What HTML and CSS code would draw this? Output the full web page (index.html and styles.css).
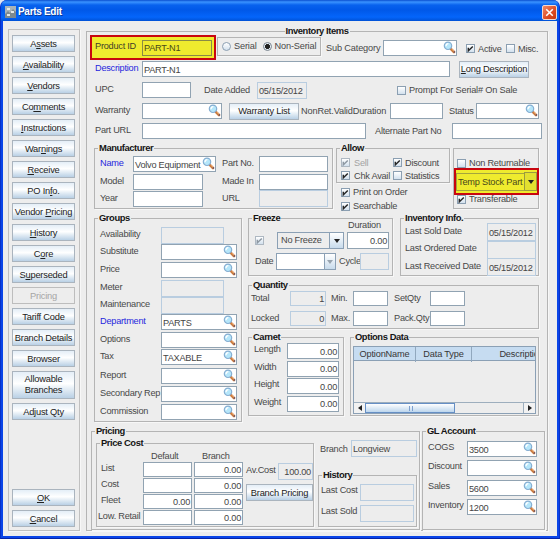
FILE: index.html
```html
<!DOCTYPE html>
<html lang="en">
<head>
<meta charset="utf-8">
<title>Parts Edit</title>
<link rel="stylesheet" href="styles.css">
</head>
<body>
<svg width="0" height="0" class="defs">
  <symbol id="mag" viewBox="0 0 13 13">
    <path d="M7.8 7.8L11 11" stroke="#c9783c" stroke-width="2.6" stroke-linecap="round"/>
    <path d="M8.6 7.9L11 10.2" stroke="#f3b47c" stroke-width="1"/>
    <path d="M10.8 11.5L12 10.6" stroke="#63506c" stroke-width="1.2"/>
    <circle cx="5" cy="4.8" r="3.7" fill="#b5e6fa" stroke="#86aed2" stroke-width="1.2"/>
    <path d="M3 5.2Q3 2.8 5.4 2.7" fill="none" stroke="#fff" stroke-width="1.2"/>
  </symbol>
  <symbol id="tick" viewBox="0 0 9 9"><path d="M2.3 3.8V6.8L6.8 2.4" fill="none" stroke="currentColor" stroke-width="1.4"/></symbol>
</svg>
<div class="window">
  <header class="titlebar">
    <svg class="appicon" viewBox="0 0 11 12"><rect width="11" height="12" fill="#a9b3b8"/><path d="M0 8L3 5L5 7L8 3L11 6V12H0Z" fill="#7d898f"/><path d="M2 2H5V4H2ZM6 5H9V7H6ZM2 8H5V10H2Z" fill="#e4e8e6"/></svg>
    <span class="wtitle">Parts Edit</span>
    <span class="close"><svg viewBox="0 0 14 14"><path d="M3.5 3.5L10.5 10.5M10.5 3.5L3.5 10.5" stroke="#fff" stroke-width="1.7"/></svg></span>
  </header>
  <div class="content">
    <nav class="sidebar">
      <button>A<u>s</u>sets</button>
      <button><u>A</u>vailability</button>
      <button><u>V</u>endors</button>
      <button>Co<u>m</u>ments</button>
      <button><u>I</u>nstructions</button>
      <button>War<u>n</u>ings</button>
      <button><u>R</u>eceive</button>
      <button>PO In<u>f</u>o.</button>
      <button>Vendor <u>P</u>ricing</button>
      <button><u>H</u>istory</button>
      <button>C<u>o</u>re</button>
      <button>S<u>u</u>perseded</button>
      <button class="off">Pricing</button>
      <button>Tariff Code</button>
      <button>Branch Details</button>
      <button>Browser</button>
      <button class="tall">Allowable<br>Branches</button>
      <button>Adjust Qty</button>
      <button class="ok"><u>O</u>K</button>
      <button><u>C</u>ancel</button>
    </nav>
    <main class="panel main">
      <h2 class="center">Inventory Items</h2>
      <div class="row row-id">
        <div class="mark product"><label>Product ID</label><span class="field">PART-N1</span></div>
        <div class="panel kinds"><i class="radio"></i><label>Serial</label><i class="radio on"></i><label>Non-Serial</label></div>
        <label class="subcat">Sub Category</label>
        <span class="field w74"><svg><use href="#mag"/></svg></span>
        <i class="check active"><svg><use href="#tick"/></svg></i><label class="activelabel">Active</label>
        <i class="check"></i><label>Misc.</label>
      </div>
      <div class="row row-desc">
        <label class="lead req">Description</label><span class="field w307">PART-N1</span>
        <button class="longdesc"><u>L</u>ong Description</button>
      </div>
      <div class="row row-upc">
        <label class="lead">UPC</label><span class="field w49"></span>
        <label class="added">Date Added</label><span class="field ro w50">05/15/2012</span>
        <i class="check prompt"></i><label>Prompt For Serial# On Sale</label>
      </div>
      <div class="row row-war">
        <label class="lead">Warranty</label><span class="field w80"><svg><use href="#mag"/></svg></span>
        <button class="warlist">Warranty List</button>
        <label class="nonret">NonRet.ValidDuration</label><span class="field w52"></span>
        <label class="status">Status</label><span class="field w63"><svg><use href="#mag"/></svg></span>
      </div>
      <div class="row row-url">
        <label class="lead">Part URL</label><span class="field w224"></span>
        <label class="altpart">Alternate Part No</label><span class="field w90"></span>
      </div>

      <div class="band band-maker">
        <section class="panel maker">
          <h2>Manufacturer</h2>
          <div class="makergrid">
            <label class="req">Name</label><span class="field w83">Volvo Equipment<svg><use href="#mag"/></svg></span><label>Part No.</label><span class="field"></span>
            <label>Model</label><span class="field w69"></span><label>Made In</label><span class="field"></span>
            <label>Year</label><span class="field w69"></span><label>URL</label><span class="field ro"></span>
          </div>
        </section>
        <div class="allowcol">
          <section class="panel allow">
            <h2>Allow</h2>
            <div class="checks">
              <i class="check dim"><svg><use href="#tick"/></svg></i><label class="faint">Sell</label><i class="check"><svg><use href="#tick"/></svg></i><label>Discount</label>
              <i class="check"><svg><use href="#tick"/></svg></i><label>Chk Avail</label><i class="check"></i><label>Statistics</label>
            </div>
          </section>
          <div class="row opt"><i class="check"><svg><use href="#tick"/></svg></i><label>Print on Order</label></div>
          <div class="row opt"><i class="check"><svg><use href="#tick"/></svg></i><label>Searchable</label></div>
        </div>
        <section class="panel stock">
          <div class="row"><i class="check"></i><label>Non Returnable</label></div>
          <div class="mark temp"><span>Temp Stock Part</span><b class="arrow"></b></div>
          <div class="row"><i class="check"><svg><use href="#tick"/></svg></i><label>Transferable</label></div>
        </section>
      </div>

      <div class="band band-groups">
        <section class="panel groups">
          <h2>Groups</h2>
          <div class="groupgrid">
            <label>Availability</label><span class="field ro"></span>
            <label>Substitute</label><span class="field"><svg><use href="#mag"/></svg></span>
            <label>Price</label><span class="field"><svg><use href="#mag"/></svg></span>
            <label>Meter</label><span class="field ro"></span>
            <label>Maintenance</label><span class="field ro"></span>
            <label class="req">Department</label><span class="field">PARTS<svg><use href="#mag"/></svg></span>
            <label>Options</label><span class="field"><svg><use href="#mag"/></svg></span>
            <label>Tax</label><span class="field">TAXABLE<svg><use href="#mag"/></svg></span>
            <label>Report</label><span class="field"><svg><use href="#mag"/></svg></span>
            <label>Secondary Rep</label><span class="field"><svg><use href="#mag"/></svg></span>
            <label>Commission</label><span class="field"><svg><use href="#mag"/></svg></span>
          </div>
        </section>
        <div class="rightcol">
          <div class="band">
            <section class="panel freeze">
              <h2>Freeze</h2>
              <label class="duration">Duration</label>
              <div class="row fr1"><i class="check dim"><svg><use href="#tick"/></svg></i><span class="select"><span>No Freeze</span><b class="arrow"></b></span><span class="field num">0.00</span></div>
              <div class="row fr2"><label>Date</label><span class="select white"><span></span><b class="arrow pale"></b></span><label class="cycle">Cycle</label><span class="field ro"></span></div>
            </section>
            <section class="panel invinfo">
              <h2>Inventory Info.</h2>
              <div class="infogrid">
                <label>Last Sold Date</label><span class="field ro">05/15/2012</span>
                <label>Last Ordered Date</label><span class="field ro"></span>
                <label>Last Received Date</label><span class="field ro">05/15/2012</span>
              </div>
            </section>
          </div>
          <section class="panel quantity">
            <h2>Quantity</h2>
            <div class="qtygrid">
              <label>Total</label><span class="field ro num">1</span><label>Min.</label><span class="field"></span><label>SetQty</label><span class="field"></span>
              <label>Locked</label><span class="field ro num">0</span><label>Max.</label><span class="field"></span><label>Pack.Qty</label><span class="field"></span>
            </div>
          </section>
          <div class="band band-carnet">
            <section class="panel carnet">
              <h2>Carnet</h2>
              <div class="carnetgrid">
                <label>Length</label><span class="field num">0.00</span>
                <label>Width</label><span class="field num">0.00</span>
                <label>Height</label><span class="field num">0.00</span>
                <label>Weight</label><span class="field num">0.00</span>
              </div>
            </section>
            <section class="panel optdata">
              <h2>Options Data</h2>
              <div class="table">
                <div class="thead"><span>OptionName</span><span>Data Type</span><span>Description</span></div>
                <div class="tbody"></div>
                <div class="scroll"><b class="left"></b><i class="thumb"></i><i class="track"></i><b class="right"></b></div>
              </div>
            </section>
          </div>
        </div>
      </div>

      <div class="band band-price">
        <section class="panel pricing">
          <h2>Pricing</h2>
          <div class="band pricebody">
            <section class="panel pricecost">
              <h2>Price Cost</h2>
              <div class="band">
                <div class="costgrid">
                  <span></span><label class="mid">Default</label><label class="mid">Branch</label>
                  <label>List</label><span class="field"></span><span class="field num">0.00</span>
                  <label>Cost</label><span class="field"></span><span class="field num">0.00</span>
                  <label>Fleet</label><span class="field num">0.00</span><span class="field num">0.00</span>
                  <label class="low">Low. Retail</label><span class="field"></span><span class="field num">0.00</span>
                </div>
                <div class="avg">
                  <div class="row"><label>Av.Cost</label><span class="field ro num">100.00</span></div>
                  <button>Branch Pricing</button>
                </div>
              </div>
            </section>
            <div class="histcol">
              <div class="row branch"><label>Branch</label><span class="field ro">Longview</span></div>
              <section class="panel history">
                <h2>History</h2>
                <div class="histgrid">
                  <label>Last Cost</label><span class="field ro"></span>
                  <label>Last Sold</label><span class="field ro"></span>
                </div>
              </section>
            </div>
          </div>
        </section>
        <section class="panel gl">
          <h2>GL Account</h2>
          <div class="glgrid">
            <label>COGS</label><span class="field">3500<svg><use href="#mag"/></svg></span>
            <label>Discount</label><span class="field"><svg><use href="#mag"/></svg></span>
            <label>Sales</label><span class="field">5600<svg><use href="#mag"/></svg></span>
            <label>Inventory</label><span class="field">1200<svg><use href="#mag"/></svg></span>
          </div>
        </section>
      </div>
    </main>
  </div>
</div>
</body>
</html>
```
FILE: styles.css
```css
* { box-sizing: border-box; }
body {
  margin: 0;
  width: 560px;
  height: 539px;
  overflow: hidden;
  background: #dfe6f2;
  font: 9.2px/12px "Liberation Sans", Arial, sans-serif;
  letter-spacing: -0.24px;
  color: #484848;
}
.defs { position: absolute; }
.window {
  height: 539px;
  border-radius: 7px 7px 0 0;
  background: #0a45e8;
  overflow: hidden;
  border-left: 1px solid #0831c8;
  border-right: 1px solid #0831c8;
  border-bottom: 1px solid #0725a8;
}
.titlebar {
  height: 21px;
  display: flex;
  align-items: center;
  padding: 3px 3px 0 4px;
  background: linear-gradient(#0a4fd0 0, #3a93ff 2px, #0862ee 5px, #0058e8 10px, #0465fb 17px, #0052d6 21px);
}
.appicon { width: 11px; height: 12px; }
.wtitle { margin-left: 2px; font: bold 10px/14px "Liberation Sans", Arial, sans-serif; letter-spacing: -0.3px; color: #fff; text-shadow: 1px 1px #0a3a9c; }
.close { margin-left: auto; margin-right: -1px; width: 15px; height: 15px; border: 1px solid #f3d9d2; border-radius: 2px; background: linear-gradient(135deg, #f08a68, #dd4a22 60%, #c63a10); }
.close svg { display: block; width: 13px; height: 13px; }
.content {
  margin: 0 2px;
  height: 515px;
  display: flex;
  background: #ededed;
  padding: 8px 0 0 5px;
}
.panel { border: 1px solid #b4b4b4; box-shadow: 1px 1px #f7f7f7; }
h2 {
  width: fit-content;
  height: 12px;
  margin: -7px 0 -5px 3px;
  padding: 0 1px;
  font: bold 9.4px/12px "Liberation Sans", Arial, sans-serif;
  letter-spacing: -0.42px;
  color: #151515;
  background: #ededed;
}
h2.center { margin-left: auto; margin-right: auto; }
label { white-space: nowrap; }
.req { color: #2626dd; }
.faint { color: #a3a3a3; }
.row, .band { display: flex; }
.row { align-items: center; }
button {
  display: block;
  padding: 0;
  margin: 0;
  height: 17px;
  border: 1px solid #aab4be;
  background: linear-gradient(#e4eef7, #fff 45%, #f1f6fa 55%, #b9d0e5);
  font: 9.3px/14px "Liberation Sans", Arial, sans-serif;
  letter-spacing: -0.22px;
  color: #222;
  text-align: center;
  white-space: nowrap;
}
u { text-underline-offset: 1px; }
.sidebar { width: 72px; height: 502px; border: 1px solid #c0c0c0; box-shadow: 1px 1px #f7f7f7; padding: 5px 4px 0 3px; display: flex; flex-direction: column; gap: 4px; }
.sidebar button.off { background: #ededed; color: #a5a5a5; border-color: #bdbdbd; }
.sidebar button.tall { height: 28px; line-height: 11.5px; }
.sidebar button.ok { margin-top: 65px; }
.field {
  display: flex;
  align-items: center;
  height: 16px;
  padding: 1px 1px 0 1px;
  border: 1px solid #91a3b2;
  background: #fff;
  white-space: nowrap;
  color: #454545;
}
.field svg { flex: none; width: 13px; height: 13px; margin: -2px -1px 0 auto; }
.field.num { justify-content: flex-end; }
.field.ro { background: #ededed; border-color: #b9cde0; height: 17px; }
.check { flex: none; width: 9px; height: 9px; border: 1px solid #8b9fb2; background: linear-gradient(#fff, #d3e1ee); color: #252525; }
.check svg { display: block; width: 9px; height: 9px; margin: -1px; }
.check.dim { color: #8e98a2; border-color: #aeb8c2; }
.check + label { margin-left: 3px; }
.mark { border: 2px solid #c8060f; background: #efeb2e; display: flex; align-items: center; }
.w74 { width: 74px; } .w307 { width: 308px; } .w49 { width: 49px; } .w50 { width: 50px; }
.w80 { width: 80px; } .w52 { width: 53px; } .w63 { width: 63px; } .w224 { width: 224px; } .w90 { width: 90px; }
.w83 { width: 83px; } .w69 { width: 70px; }

.main { margin: 2px 0 0 6px; width: 462px; height: 500px; }
.row-id { height: 25px; margin: 3px 0 0 3px; }
.product { width: 126px; height: 25px; padding-left: 3px; }
.product label { width: 47px; margin-top: -3px; color: #3f3f28; }
.product .field { width: 70px; background: #efeb2e; border-color: #8a8b45; color: #4a4a18; }
.kinds { margin-left: 1px; width: 104px; height: 19px; margin-top: -3px; display: flex; align-items: center; padding-left: 4px; }
.kinds label { margin-left: 3px; letter-spacing: -0.16px; }
.radio { width: 9px; height: 9px; border: 1px solid #8b9fb2; border-radius: 50%; background: linear-gradient(#fff, #d3e1ee); }
.radio.on { margin-left: 6px; background: radial-gradient(circle, #222 0 2.2px, #e6eef6 2.8px); border-color: #78838e; }
.subcat { margin-left: 5px; width: 57px; letter-spacing: -0.15px; }
.active { margin-left: 9px; }
.row-id .check { margin-top: 2px; }
.row-id .check + label { margin-top: 2px; }
.activelabel { width: 28px; }
.lead { width: 55px; padding-left: 8px; padding-bottom: 2px; }
.row-desc { margin-top: 1px; height: 16px; }
.longdesc { margin-left: 9px; width: 70px; }
.row-upc { margin-top: 5px; height: 16px; }
.added { margin-left: 13px; width: 53px; letter-spacing: -0.2px; padding-bottom: 1px; }
.prompt { margin-left: 90px; }
.prompt + label { letter-spacing: -0.18px; }
.row-war { margin-top: 5px; height: 16px; }
.warlist { margin-left: 7px; width: 70px; }
.nonret { margin-left: 2px; width: 89px; letter-spacing: -0.15px; }
.status { margin-left: 6px; width: 27px; }
.row-url { margin-top: 4px; height: 16px; }
.altpart { margin-left: 9px; width: 77px; }

.band-maker { margin: 9px 0 0 7px; height: 61px; }
.maker { width: 239px; }
.makergrid { display: grid; grid-template-columns: 33px 89px 37px 69px; grid-template-rows: 18px 17px 17px; align-items: center; padding: 6px 0 0 5px; }
.makergrid label { padding-bottom: 2px; }
.allowcol { margin-left: 3px; width: 114px; }
.allow { height: 35px; }
.checks { display: grid; grid-template-columns: 12px 40px 11px 1fr; grid-template-rows: 13px 13px; align-items: center; padding: 7px 0 0 4px; }
.checks .check + label { margin-left: 1px; }
.opt { height: 14px; padding-left: 5px; }
.opt:nth-child(2) { margin-top: 2px; }
.stock { margin-left: 3px; width: 86px; padding-top: 8px; }
.stock .row { height: 12px; padding-left: 3px; }
.temp { position: relative; width: 85px; height: 27px; margin: -1px 0 -2px 0; }
.temp span { flex: 1; padding-left: 1px; letter-spacing: -0.2px; line-height: 16px; border: 1px solid #a4a53d; border-right: 0; color: #47471c; }
.arrow { display: flex; align-items: center; justify-content: center; width: 14px; align-self: stretch; border-left: 1px solid #8ba0b5; background: linear-gradient(#fff, #c8dbec); }
.arrow::after { content: ""; border: 3.5px solid transparent; border-top: 4px solid #222; border-bottom: 0; }
.arrow.pale::after { border-top-color: #98a4af; border-left-width: 3px; border-right-width: 3px; }
.temp .arrow { width: 13px; background: #e2e030; border: 1px solid #9a9b40; margin: 2px 0; }

.band-groups { margin: 9px 0 0 7px; height: 204px; }
.groups { width: 148px; }
.groupgrid { display: grid; grid-template-columns: 61px 76px; grid-template-rows: 17px 18px 18px 17px 17px 18px 17px 19px 18px 18px 16px; align-items: start; padding: 8px 0 0 5px; }
.groupgrid .ro { width: 63px; }
.groupgrid label { padding-top: 1px; }
.rightcol { margin-left: 6px; width: 291px; }
.freeze { width: 145px; height: 58px; }
.duration { display: block; width: 33px; margin: 0 0 1px 99px; height: 12px; }
.fr1 { padding-left: 6px; height: 17px; }
.fr2 { padding-left: 6px; height: 17px; margin-top: 4px; }
.select { display: flex; width: 67px; height: 17px; border: 1px solid #8ba0b5; background: #ededed; line-height: 15px; }
.select span { flex: 1; padding-left: 3px; }
.fr1 .select { margin-left: 13px; }
.fr1 .field { width: 42px; margin-left: 3px; height: 17px; }
.fr2 > label:first-child { width: 21px; padding-bottom: 2px; }
.fr2 .select { width: 60px; background: #fff; }
.fr2 .arrow { width: 11px; }
.cycle { margin-left: 3px; width: 21px; padding-bottom: 2px; }
.fr2 .field { width: 29px; }
.invinfo { margin-left: 7px; width: 139px; height: 58px; }
.infogrid { display: grid; grid-template-columns: 82px 49px; grid-template-rows: 18px 17px 18px; align-items: center; padding: 4px 0 0 4px; }
.infogrid label { padding-bottom: 3px; }
.infogrid .field { height: 18px; }
.quantity { margin-top: 9px; height: 44px; }
.qtygrid { display: grid; grid-template-columns: 39px 36px 27px 35px 42px 35px; grid-template-rows: 15px 15px; row-gap: 5px; padding: 5px 0 0 2px; align-items: center; }
.qtygrid .field { height: 15px; }
.qtygrid label { padding-bottom: 2px; }
.qtygrid label:nth-child(4n+3), .qtygrid label:nth-child(9) { padding-left: 5px; }
.qtygrid label:nth-child(5), .qtygrid label:nth-child(11) { padding-left: 6px; }
.qtygrid label:nth-child(7) { padding-left: 0; }
.band-carnet { margin-top: 8px; }
.carnet { width: 96px; height: 79px; }
.carnetgrid { display: grid; grid-template-columns: 33px 52px; grid-template-rows: 17.5px 17.5px 17.5px 17.5px; padding: 5px 0 0 5px; }
.optdata { margin-left: 6px; width: 189px; height: 79px; }
.table { margin: 8px 2px 0; height: 68px; border: 1px solid #8ba0b5; display: flex; flex-direction: column; overflow: hidden; }
.thead { display: grid; grid-template-columns: 62px 56px 100px; height: 14px; line-height: 15px; background: #c6dcf1; border-bottom: 1px solid #8ba0b5; color: #363636; }
.thead span { text-align: center; border-right: 1px solid #91a8be; letter-spacing: -0.16px; }
.tbody { flex: 1; }
.scroll { display: flex; height: 11px; border-top: 1px solid #9daebd; }
.scroll b { width: 11px; display: flex; align-items: center; justify-content: center; background: #f2f2f2; }
.scroll b::after { content: ""; border: 3px solid transparent; }
.left::after { border-right: 4px solid #222 !important; border-left: 0 !important; }
.right::after { border-left: 4px solid #222 !important; border-right: 0 !important; }
.thumb { width: 90px; border: 1px solid #668fc5; background: linear-gradient(90deg, transparent 43px, #7ea0cf 43px 44px, transparent 44px 46px, #7ea0cf 46px 47px, transparent 47px) no-repeat 0 2px / 100% 5px, linear-gradient(#fff, #bdd6ed); }
.track { flex: 1; border-right: 1px solid #9daebd; }

.band-price { margin: 9px 0 0 4px; height: 99px; }
.pricing { width: 329px; }
.pricebody { padding: 11px 0 0 4px; }
.pricecost { width: 218px; height: 84px; }
.costgrid { display: grid; grid-template-columns: 46px 51px 49px; grid-template-rows: 12px 16px 16px 16px 16px; margin-top: 6px; }
.costgrid .field { width: 49px; height: 15px; }
.costgrid label { padding-left: 4px; }
.costgrid label.low { padding-left: 1px; }
.costgrid label.mid { padding-left: 8px; }
.avg { margin: 19px 0 0 3px; width: 67px; }
.avg label { width: 32px; padding-bottom: 3px; }
.avg .field { width: 35px; }
.avg button { margin-top: 4px; width: 67px; }
.histcol { margin: -3px 0 0 4px; width: 99px; }
.branch { height: 17px; padding-left: 2px; }
.branch label { width: 31px; }
.branch .field { width: 66px; }
.history { margin-top: 18px; height: 52px; }
.histgrid { display: grid; grid-template-columns: 39px 54px; grid-template-rows: 17px 17px; row-gap: 4px; padding: 8px 0 0 2px; }
.gl { margin-left: 2px; width: 123px; }
.glgrid { display: grid; grid-template-columns: 39px 70px; grid-template-rows: 19px 20px 19px 17px; padding: 9px 0 0 5px; }
```
